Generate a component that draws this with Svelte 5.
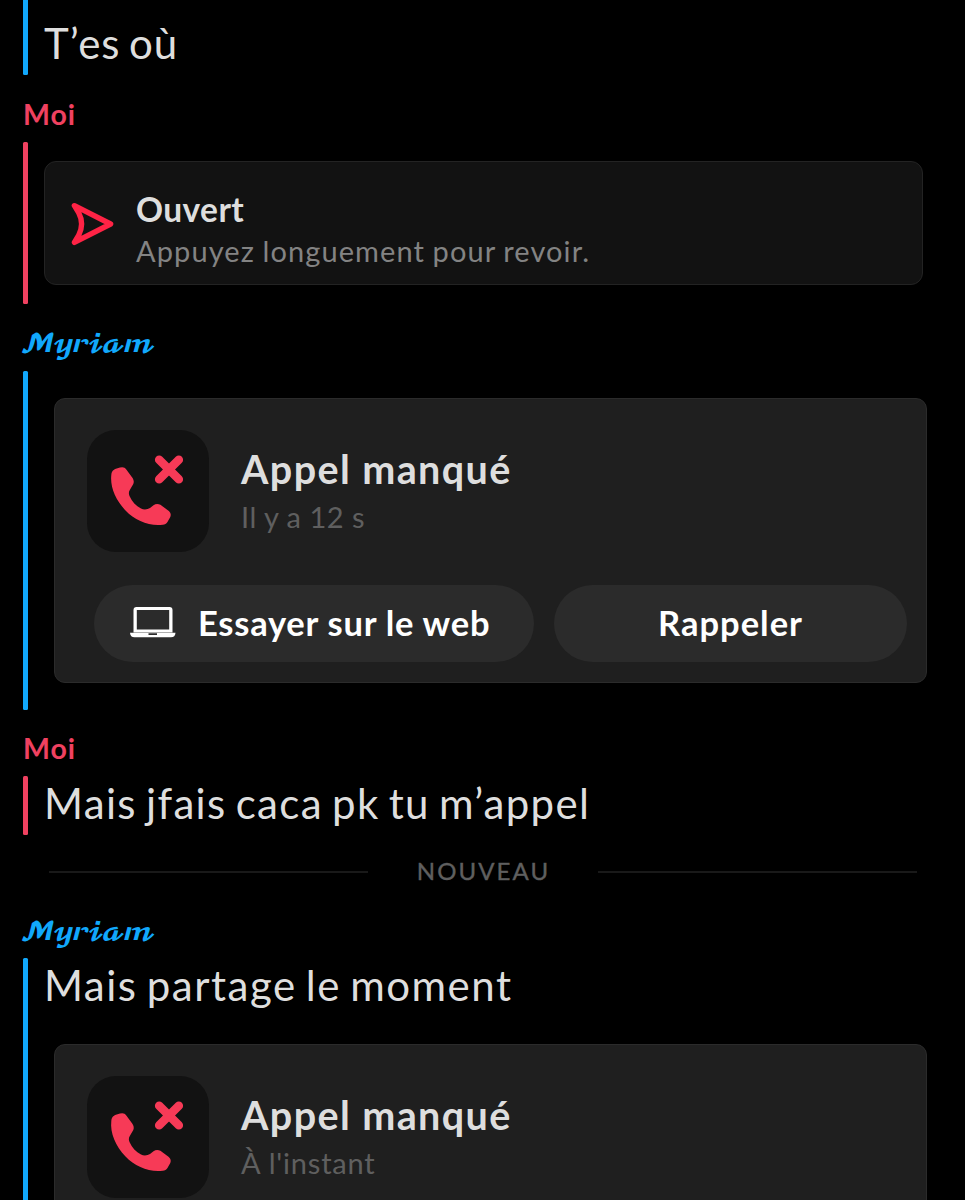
<script>
  const me = 'Moi';
  const friend = '𝓜𝔂𝓻𝓲𝓪𝓶';
</script>

{#snippet callHead(when)}
  <div class="call-head">
    <div class="tile">
      <svg width="122" height="122" viewBox="0 0 122 122">
        <path
          d="M26 40.500C28.500 38.500 32.500 37.400 35.200 37.300C37 37.300 38.200 38.200 39.300 39.500L45.200 47.500C46.800 49.800 47.200 52 46.300 54L42.800 60C41.500 62 41.700 64 42.500 66C45 71.800 49 76 54 78.500C57 80 60.500 79.500 63 78L66.500 75.300C68.500 73.800 71 73.600 73.400 74.800L81.500 80.700C83.800 82.600 84.200 84.600 83.300 87L80.300 92.200C79.300 93.900 77.800 94.500 75.800 94.800C62 96.500 48 90.500 38.500 80.500C28.500 70 23 57 24.300 45C24.500 43 24.800 41.600 26 40.500Z"
          fill="#f73a57"
        />
        <path d="M72.200 29.800L91.800 49.200M91.800 29.800L72.200 49.200" stroke="#f73a57" stroke-width="8.600" stroke-linecap="round" />
      </svg>
    </div>
    <div class="call-text">
      <div class="call-title">Appel manqué</div>
      <div class="call-sub" class:now={when.startsWith('À')}>{when}</div>
    </div>
  </div>
{/snippet}

<main>
  <section class="friend">
    <div class="body first"><p class="m1">T’es où</p></div>
  </section>

  <section class="me">
    <h2>{me}</h2>
    <div class="body snap-body">
      <div class="snap">
        <svg width="44" height="44" viewBox="0 0 44 44">
          <path d="M3.400 3.600L39.600 22L3.400 40.400L7.600 33.500Q13.600 22 7.600 10.500Z" fill="none" stroke="#ff2345" stroke-width="5.400" stroke-linejoin="round" />
        </svg>
        <div class="snap-text">
          <div class="snap-title">Ouvert</div>
          <div class="snap-sub">Appuyez longuement pour revoir.</div>
        </div>
      </div>
    </div>
  </section>

  <section class="friend">
    <h2 class="script">{friend}</h2>
    <div class="body call-body">
      <div class="call">
        {@render callHead('Il y a 12 s')}
        <div class="buttons">
          <button class="web">
            <svg width="46" height="32" viewBox="0 0 46 32">
              <path fill-rule="evenodd" fill="#fff" d="M6.500 0H39.500Q42.500 0 42.500 3V25.500H3.500V3Q3.500 0 6.500 0ZM6.800 3V22.500H39.200V3Z" />
              <path fill-rule="evenodd" fill="#fff" d="M0 25.800H45.500Q45.200 30.300 41 30.300H4.500Q.3 30.300 0 25.800ZM18.500 26.300V27.900H27V26.300Z" />
            </svg>
            <span>Essayer sur le web</span>
          </button>
          <button class="back"><span>Rappeler</span></button>
        </div>
      </div>
    </div>
  </section>

  <section class="me">
    <h2 class="second">{me}</h2>
    <div class="body"><p class="m2">Mais jfais caca pk tu m’appel</p></div>
  </section>

  <div class="divider"><i></i><span>NOUVEAU</span><i></i></div>

  <section class="friend">
    <h2 class="script last">{friend}</h2>
    <div class="body call-body tail">
      <p class="m3">Mais partage le moment</p>
      <div class="call">
        {@render callHead("À l'instant")}
      </div>
    </div>
  </section>
</main>

<style>
  :global(body) {
    background: #000;
  }
  main {
    width: 965px;
    height: 1200px;
    overflow: hidden;
    background: #000;
    color: #dedede;
    font-family: Lato, sans-serif;
    white-space: nowrap;
  }
  section {
    padding-left: 22px;
  }
  .friend {
    --tone: #11a8fc;
  }
  .me {
    --tone: #f04160;
  }
  h2 {
    margin: 0;
    box-sizing: border-box;
    height: 67px;
    padding: 17px 0 0 1px;
    font-size: 28.5px;
    line-height: 44px;
    font-weight: 700;
    letter-spacing: 0.9px;
    color: var(--tone);
  }
  h2.second {
    height: 66px;
    padding-top: 16px;
  }
  h2.script {
    margin-left: -2px;
    padding: 19px 0 0;
    font-family: 'DejaVu Math TeX Gyre', Lato, serif;
    font-weight: 400;
    letter-spacing: -3.6px;
    font-size: 25px;
  }
  .body {
    box-sizing: border-box;
    position: relative;
    height: 59px;
    padding-left: 22px;
  }
  .body::before {
    content: '';
    position: absolute;
    left: 0.5px;
    top: 0;
    bottom: 0;
    width: 5px;
    border-radius: 1.5px;
    background: var(--tone);
  }
  .body.first {
    height: 75px;
    padding-top: 16px;
  }
  .first::before {
    border-radius: 0 0 1.5px 1.5px;
  }
  p {
    margin: 0;
    font-size: 42px;
    line-height: 54px;
    word-spacing: -3px;
  }
  .m1 {
    letter-spacing: 0.9px;
  }
  .m2 {
    letter-spacing: 1.35px;
  }
  .m3 {
    letter-spacing: 1.5px;
  }
  .snap-body {
    height: 162px;
    padding-top: 19px;
  }
  .snap {
    box-sizing: border-box;
    width: 879px;
    height: 124px;
    padding-left: 26px;
    display: flex;
    background: #121212;
    border: 1.5px solid #232323;
    border-radius: 12px;
  }
  .snap svg {
    margin-top: 39.5px;
  }
  .snap-text {
    margin-left: 21px;
    padding-top: 26px;
  }
  .snap-title {
    font-size: 33.5px;
    line-height: 42px;
    font-weight: 700;
    letter-spacing: 0.4px;
  }
  .snap-sub {
    font-size: 29px;
    line-height: 42px;
    color: #838383;
    letter-spacing: 1.1px;
    word-spacing: -1px;
  }
  .call-body {
    height: 339px;
    padding: 27px 0 0 32px;
  }
  .call {
    box-sizing: border-box;
    width: 873px;
    height: 285px;
    background: #1f1f1f;
    border: 1px solid #2b2b2b;
    border-radius: 11px;
    padding: 31px 0 0 32px;
  }
  .call-head {
    display: flex;
    height: 122px;
  }
  .tile {
    width: 122px;
    height: 122px;
    border-radius: 29px;
    background: #121212;
  }
  .call-text {
    margin-left: 32px;
    padding-top: 15px;
  }
  .call-title {
    font-size: 39.5px;
    line-height: 48px;
    font-weight: 700;
    letter-spacing: 1.4px;
  }
  .call-sub {
    font-size: 29px;
    line-height: 47px;
    color: #5f5f5f;
    letter-spacing: 0.5px;
  }
  .call-sub.now {
    letter-spacing: 0.8px;
  }
  .buttons {
    display: flex;
    gap: 20px;
    padding: 33px 0 0 7px;
  }
  button {
    all: unset;
    box-sizing: border-box;
    height: 77px;
    padding-bottom: 2px;
    display: flex;
    align-items: center;
    border-radius: 39px;
    background: #2b2b2b;
    color: #fff;
    font: 700 34.5px/48px Lato, sans-serif;
    letter-spacing: 0.75px;
  }
  .web {
    width: 440px;
    padding-left: 36px;
  }
  .web span {
    margin-left: 22px;
  }
  .back {
    width: 353px;
    justify-content: center;
    letter-spacing: 1px;
  }
  .divider {
    height: 74px;
    margin: 0 48px 0 49px;
    display: flex;
    align-items: center;
    justify-content: space-between;
  }
  .divider i {
    width: 319px;
    height: 2px;
    background: #191919;
  }
  .divider span {
    padding: 0 0 3px 1px;
    font-size: 24px;
    letter-spacing: 2.1px;
    color: #5f5f5f;
    -webkit-text-stroke: 0.4px #5f5f5f;
  }
  h2.script.last {
    height: 49px;
    padding-top: 2px;
  }
  .tail {
    height: 400px;
    padding-top: 0;
  }
  .tail p {
    margin: 0 0 32px -10px;
  }
</style>
